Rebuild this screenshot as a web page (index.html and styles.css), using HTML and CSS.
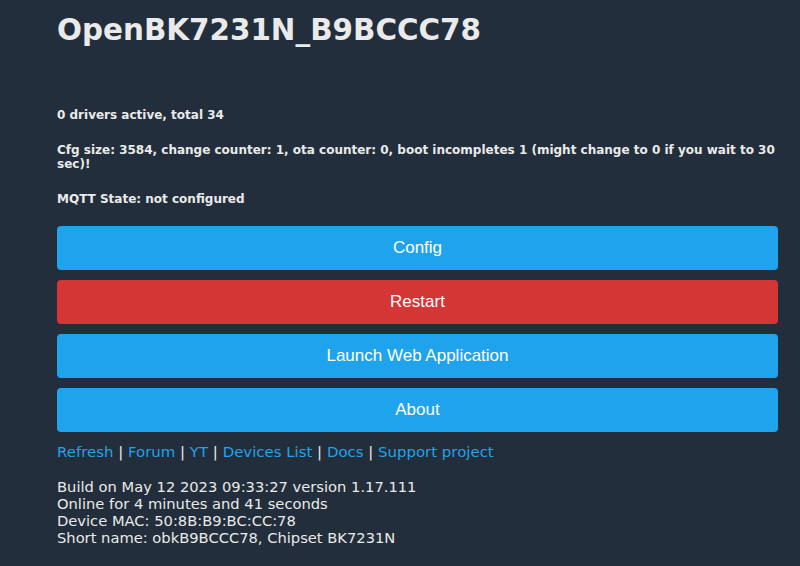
FILE: index.html
```html
<!DOCTYPE html>
<html lang="en">
<head>
<meta charset="utf-8">
<title>OpenBK7231N_B9BCCC78</title>
<link rel="stylesheet" href="styles.css">
</head>
<body>
<main class="page">
  <h1 class="title">OpenBK7231N_B9BCCC78</h1>
  <div class="status">
    <p class="status-line">0 drivers active, total 34</p>
    <p class="status-line">Cfg size: 3584, change counter: 1, ota counter: 0, boot incompletes 1 (might change to 0 if you wait to 30 sec)!</p>
    <p class="status-line">MQTT State: not configured</p>
  </div>
  <nav class="buttons">
    <a class="btn" href="#">Config</a>
    <a class="btn btn-red" href="#">Restart</a>
    <a class="btn" href="#">Launch Web Application</a>
    <a class="btn" href="#">About</a>
  </nav>
  <div class="links">
    <a href="#">Refresh</a> | <a href="#">Forum</a> | <a href="#">YT</a> | <a href="#">Devices List</a> | <a href="#">Docs</a> | <a href="#">Support project</a>
  </div>
  <div class="info">
    Build on May 12 2023 09:33:27 version 1.17.111<br>
    Online for 4 minutes and 41 seconds<br>
    Device MAC: 50:8B:B9:BC:CC:78<br>
    Short name: obkB9BCCC78, Chipset BK7231N
  </div>
</main>
</body>
</html>
```

FILE: styles.css
```css
html, body {
  margin: 0;
  padding: 0;
}
body {
  background: #222e3b;
  color: #eaeaea;
  font-family: "DejaVu Sans", Verdana, sans-serif;
}
.page {
  width: 721px;
  padding: 0 0 0 57px;
}
.title {
  margin: 0;
  padding-top: 13px;
  font-size: 29.4px;
  line-height: 34px;
  font-weight: bold;
  color: #eaeaea;
}
.status {
  padding-top: 61px;
}
.status-line {
  margin: 0 0 21px 0;
  font-size: 12px;
  line-height: 14px;
  font-weight: bold;
}
.status-line:last-child {
  margin-bottom: 20px;
}
.buttons {
  display: flex;
  flex-direction: column;
  gap: 10px;
}
.btn {
  display: block;
  height: 44px;
  line-height: 43px;
  border-radius: 4px;
  background: #1fa3ec;
  color: #fff;
  text-align: center;
  text-decoration: none;
  font-family: "Liberation Sans", Arial, sans-serif;
  font-size: 17px;
}
.btn-red {
  background: #d43535;
}
.links {
  margin-top: 10px;
  font-size: 14.95px;
  line-height: 20px;
  color: #eaeaea;
}
.links a {
  color: #1fa3ec;
  text-decoration: none;
}
.info {
  margin-top: 16px;
  font-size: 14.7px;
  line-height: 17px;
}
```
